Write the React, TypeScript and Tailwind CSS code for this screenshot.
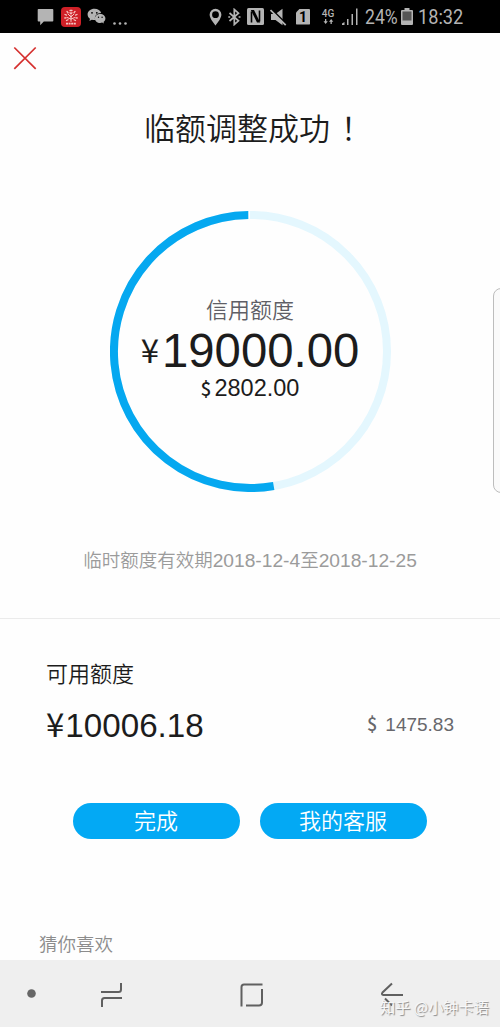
import React from 'react';

const RADIUS = 136.5;

const StatusBar = () => (
  <header className="flex h-[33px] items-center bg-black pl-[37px] text-[#b4b4b4]">
    <svg width="17" height="18" viewBox="0 0 17 18" fill="currentColor">
      <path d="M1.500 1h14a.8.8 0 0 1 .8.8v11a.8.8 0 0 1-.8.8H6.800L3.200 17.200v-3.600H1.500a.8.8 0 0 1-.8-.8v-11A.8.8 0 0 1 1.500 1Z" />
    </svg>
    <svg className="ml-[7px]" width="20" height="20" viewBox="0 0 20 20">
      <rect width="20" height="20" rx="4" fill="#cf2027" />
      <g stroke="#f7c9c6" strokeWidth="1" strokeLinecap="round" fill="none">
        <path d="M10 14.500V8M10 10 7 7M10 10l3-3M10 12l-4-1.500M10 12l4-1.500" />
        <path d="M9 3.500h2M6 4.500l1 1.200M14 4.500l-1 1.200M4 7.500l1.500.6M16 7.500l-1.500.6M3.800 11l1.200-.2M16.200 11l-1.200-.2M5.500 13.500l1.500-.8M14.500 13.500l-1.500-.8M9 5.800l1 .8 1-.8" strokeWidth="1.300" />
        <path d="M5 16.700h10" strokeWidth="1.800" strokeDasharray="2 .6" strokeLinecap="butt" />
      </g>
    </svg>
    <svg className="ml-[6px]" width="19" height="17" viewBox="0 0 19 17">
      <path fill="currentColor" d="M7.500.8C3.600.8.6 3.300.6 6.500c0 1.800 1 3.300 2.400 4.300L2.400 13l2.400-1.300c.9.300 1.800.4 2.700.4h.7C7 8 9.800 5 14.200 5 13.500 2.500 10.800.8 7.500.8Z" />
      <path fill="currentColor" d="M13.200 5.900c-3 0-5.300 2-5.300 4.500s2.300 4.500 5.300 4.500c.7 0 1.300-.1 1.900-.3l1.900 1-.5-1.700c1.200-.8 1.900-2 1.900-3.500 0-2.500-2.300-4.500-5.200-4.500Z" />
      <g fill="#000">
        <circle cx="5" cy="4.800" r=".9" />
        <circle cx="9.800" cy="4.800" r=".9" />
        <circle cx="11.500" cy="9.200" r=".7" />
        <circle cx="15.100" cy="9.200" r=".7" />
      </g>
    </svg>
    <svg className="mt-[14px] ml-[7px]" width="14" height="4" viewBox="0 0 14 4" fill="currentColor">
      <circle cx="1.500" cy="1.500" r="1.300" />
      <circle cx="7" cy="1.500" r="1.300" />
      <circle cx="12.500" cy="1.500" r="1.300" />
    </svg>

    <svg className="ml-[82px]" width="13" height="18" viewBox="0 0 13 18">
      <path fill="currentColor" fillRule="evenodd" d="M6.500.8A5.900 5.900 0 0 0 .6 6.700c0 4 5.900 10.700 5.900 10.700s5.900-6.700 5.900-10.700A5.900 5.900 0 0 0 6.500.8Zm0 2.500a3.400 3.400 0 1 1 0 6.800 3.400 3.400 0 0 1 0-6.800Z" />
    </svg>
    <svg className="ml-[6px]" width="13" height="18" viewBox="0 0 13 18" fill="none" stroke="currentColor" strokeWidth="1.700">
      <path d="M1.500 5 10.500 12.800 6.300 16.500V1.500l4.200 3.700L1.500 13" />
      <path d="M.3 9h1.900M10.600 9h1.900" />
    </svg>
    <svg className="ml-[6px]" width="17" height="17" viewBox="0 0 17 17">
      <rect width="17" height="17" rx="1.500" fill="currentColor" />
      <path d="M4.500 14.500V3.500M12.500 13.500V2.500" stroke="#000" strokeWidth="1.600" />
      <path d="M3.800 2H7l6.200 12.500H10Z" fill="#000" />
    </svg>
    <svg className="ml-[6px]" width="17" height="18" viewBox="0 0 17 18">
      <path d="M1 6h4.500L12.500.8v16.400L5.500 12H1Z" fill="currentColor" />
      <path d="M1.500 1.200 17 16.700" stroke="#000" strokeWidth="1.800" />
      <path d="M.5 2 15.700 17.200" stroke="currentColor" strokeWidth="1.700" />
    </svg>
    <div className="ml-[9px] flex h-4 w-[14px] items-center justify-center rounded-[1px] bg-[#b4b4b4] font-['Roboto',sans-serif] text-[14px] leading-none font-bold text-black [clip-path:polygon(28%_0,100%_0,100%_100%,0_100%,0_25%)]">
      1
    </div>
    <div className="ml-[11px] flex w-[14px] flex-col items-center font-['Roboto',sans-serif] text-[10px] leading-[10px] font-medium">
      <span>4G</span>
      <svg width="11" height="5" viewBox="0 0 11 5" fill="currentColor">
        <path d="M2 0h1.300v2.200h1.500L2.650 5 .5 2.200H2ZM7.500 5h1.300V2.800h1.500L8.150 0 6 2.800h1.500Z" />
      </svg>
    </div>
    <svg className="ml-[7px]" width="16" height="17" viewBox="0 0 16 17" fill="currentColor">
      <path d="M0 17v-1.500L2.500 14v3ZM5 11h1.500v6H5ZM9.500 6H11v11H9.500ZM14 .5h1.500V17H14Z" />
    </svg>
    <div className="ml-[7px] w-[34px] font-['Roboto',sans-serif] text-xl leading-none">
      <span className="inline-block origin-left scale-x-[.88]">24%</span>
    </div>
    <svg className="ml-[2px]" width="12" height="17" viewBox="0 0 12 17">
      <path d="M3.500 0h5v2H11a1 1 0 0 1 1 1v13a1 1 0 0 1-1 1H1a1 1 0 0 1-1-1V3a1 1 0 0 1 1-1h2.500Z" fill="#b4b4b4" />
      <path d="M1.500 3.500h9v9h-9z" fill="#555" />
    </svg>
    <div className="ml-[5px] w-[46px] font-['Roboto',sans-serif] text-xl leading-none">
      <span className="inline-block origin-left scale-x-[.91]">18:32</span>
    </div>
  </header>
);

const CreditRing = () => (
  <section className="relative mx-auto mt-[59px] h-[281px] w-[281px] pt-[80px]">
    <svg className="absolute inset-0" width="281" height="281" viewBox="0 0 281 281" fill="none" strokeWidth="8">
      <circle cx="140.500" cy="140.500" r={RADIUS} stroke="#e4f7fe" />
      <path d="M138.500 4.010A136.500 136.500 0 1 0 163.700 275" stroke="#05a8f0" />
      <path d="M139.300 0v8" stroke="#fff" strokeWidth="1.500" />
    </svg>
    <div className="relative flex flex-col items-center text-[#1c1c1c]">
      <div className="text-[22px] leading-[34px] font-[350] text-[#5f5f66]">信用额度</div>
      <div className="mt-[3px] flex h-[45px] items-center font-['Liberation_Sans',sans-serif] text-[47.300px] leading-[45px]">
        <span className="mr-[3px] -mt-[2px] font-['Noto_Sans_CJK_SC',sans-serif] text-[33px]">¥</span>
        <span>19000.00</span>
      </div>
      <div className="mt-[2px] flex h-[26px] items-center font-['Liberation_Sans',sans-serif] text-[23.500px] leading-[26px]">
        <span className="mr-[3px] -mt-px font-['Noto_Sans_CJK_SC',sans-serif] text-[19px] font-medium">$</span>
        <span>2802.00</span>
      </div>
    </div>
  </section>
);

const NavigationBar = () => (
  <nav className="relative flex h-[67px] bg-[#efefef]">
    <svg width="500" height="67" viewBox="0 0 500 67" fill="none" stroke="#606060" strokeWidth="2" strokeLinecap="butt">
      <circle cx="31.500" cy="33.500" r="4.300" fill="#666" stroke="none" />
      <path d="M101 32h17.500q2.500 0 2.500-2.500V23M122 38h-17.500q-2.500 0-2.500 2.500V47" />
      <path d="M262.500 24.500H244q-2.500 0-2.500 2.500v19.500M246 45.500h13q3 0 3-3V29" />
      <path d="m392 23.500-9.500 9q-1.500 2 1 2.500H403M385 38.500l7 7" />
    </svg>
    <div className="absolute top-[34px] left-[380px] text-[15.200px] leading-6 whitespace-nowrap text-[#f8f8f8] [text-shadow:1px_1px_1px_#888]">
      知乎 @小钟卡语
    </div>
  </nav>
);

const App = () => {
  return (
    <div className="relative flex h-[1027px] w-[500px] flex-col overflow-hidden bg-[#fefefe] font-['Noto_Sans_CJK_SC',sans-serif]">
      <StatusBar />

      <main className="flex-1">
        <button className="mt-[13px] ml-[13px] block" aria-label="关闭">
          <svg width="24" height="24" viewBox="0 0 24 24" stroke="#d5302f" strokeWidth="1.700">
            <path d="M1.300 1.500 22.700 22.900M22.700 1.500 1.300 22.900" />
          </svg>
        </button>

        <h1 className="mt-8 pl-[144px] text-[31px] leading-[50px] font-[350] text-[#1c1c1c]">
          临额调整成功<span className="ml-[3px] font-['Noto_Sans_CJK_TC',sans-serif]">！</span>
        </h1>

        <CreditRing />

        <p className="mt-[53px] text-center text-[18.500px] leading-7 font-[350] text-[#9b9b9b]">
          临时额度有效期
          <span className="font-['Liberation_Sans',sans-serif] text-[19.200px]">2018-12-4</span>至
          <span className="font-['Liberation_Sans',sans-serif] text-[19.200px]">2018-12-25</span>
        </p>

        {/* Available credit */}
        <section className="mt-[43px] border-t border-[#ebebeb] px-[46px] pt-[37px]">
          <h2 className="text-[22px] leading-8 font-[350] text-[#1c1c1c]">可用额度</h2>
          <div className="mt-[17px] flex h-[38px] items-center justify-between font-['Liberation_Sans',sans-serif]">
            <div className="flex items-baseline text-[33.200px] leading-[38px] text-[#1c1c1c]">
              <span className="mr-px font-['Noto_Sans_CJK_SC',sans-serif] text-[33px]">¥</span>
              <span>10006.18</span>
            </div>
            <div className="flex items-baseline text-[19px] leading-[38px] text-[#68686c]">
              <span className="mr-[8px] font-['Noto_Sans_CJK_SC',sans-serif] text-[18px] font-medium">$</span>
              <span>1475.83</span>
            </div>
          </div>
        </section>

        <div className="mt-[60px] flex gap-[20px] pl-[72.500px] text-[22px] font-[350] text-white">
          <button className="h-9 w-[167px] rounded-full bg-[#03a9f4] pb-[3px] leading-[33px]">完成</button>
          <button className="h-9 w-[167px] rounded-full bg-[#03a9f4] pb-[3px] leading-[33px]">我的客服</button>
        </div>

        <h3 className="mt-[90px] pl-[39px] text-[18.500px] leading-7 font-[350] text-[#8c8c8c]">猜你喜欢</h3>
      </main>

      <NavigationBar />

      {/* Edge panel handle */}
      <div className="absolute top-[288px] left-[493px] h-[205px] w-4 rounded-lg border border-[#bdbdbd] bg-[#fafafa]" />
    </div>
  );
};

export default App;
